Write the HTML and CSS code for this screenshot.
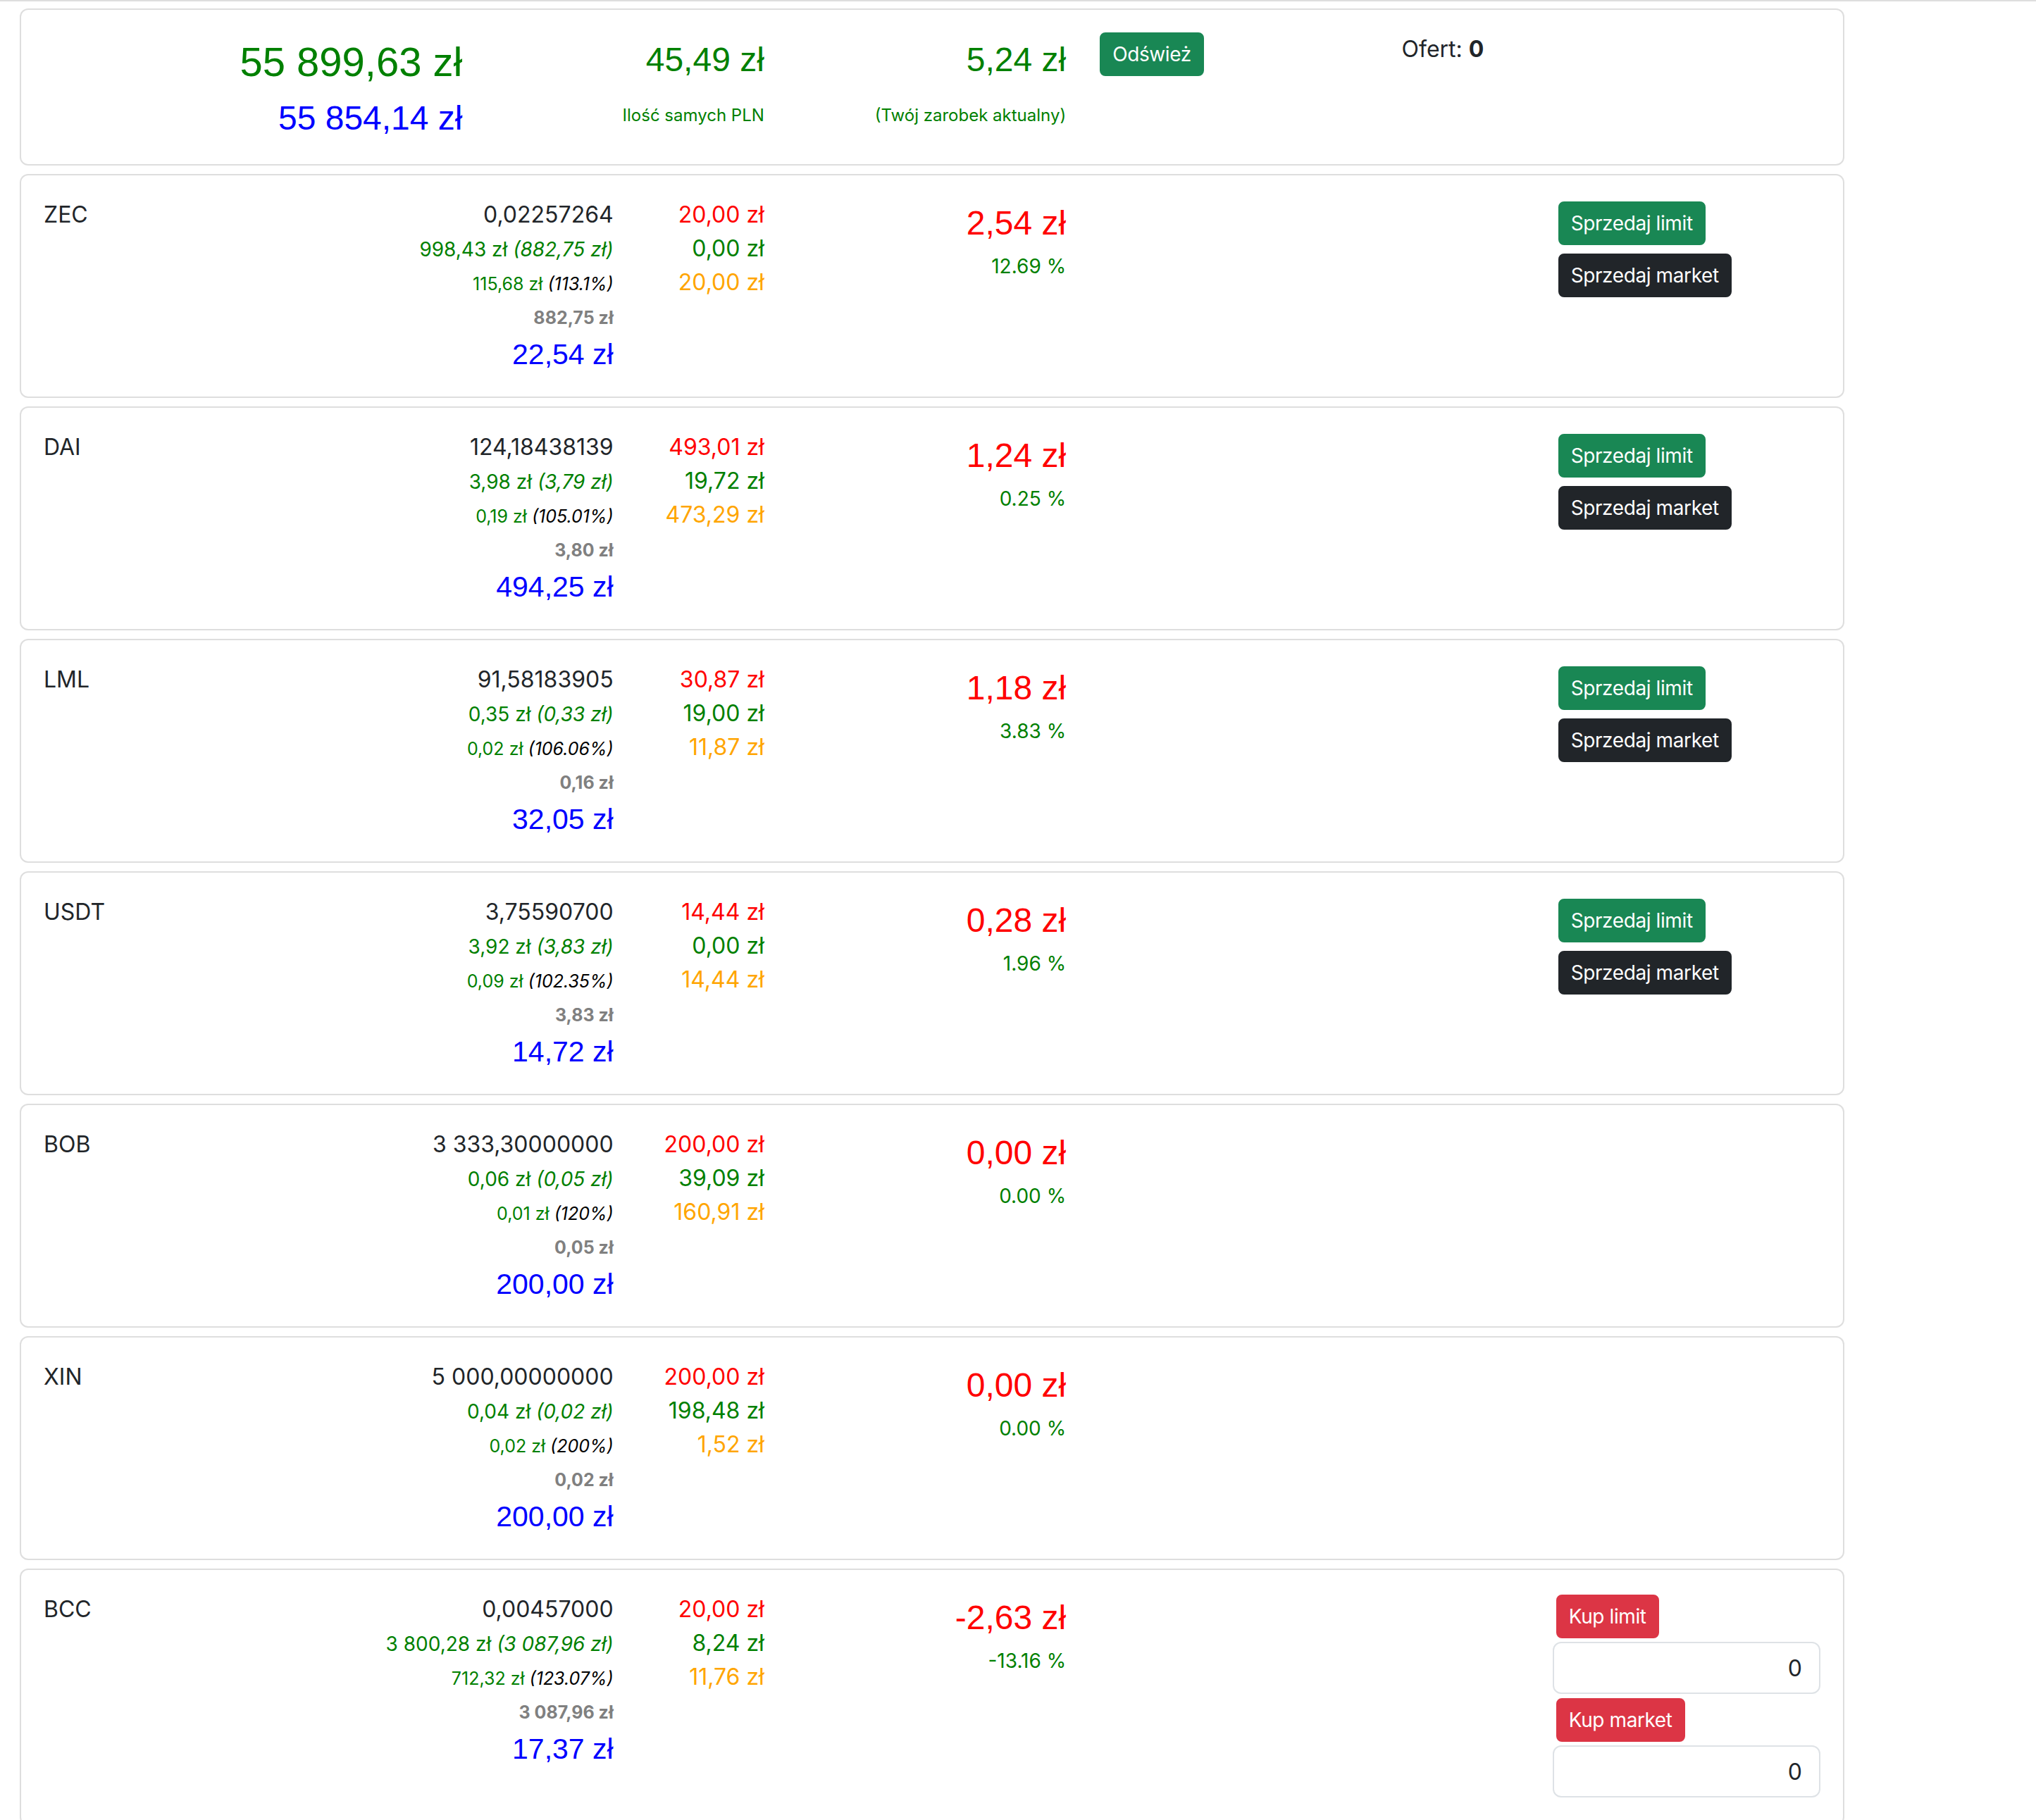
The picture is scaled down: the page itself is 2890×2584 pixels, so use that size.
FILE: index.html
```html
<!DOCTYPE html>
<html lang="pl">
<head>
<meta charset="utf-8">
<title>Portfel</title>
<link rel="stylesheet" href="styles.css">
</head>
<body>
<div class="topline"></div>
<main class="page">

  <section class="card">
    <div class="row">
      <div class="s3 r">
        <div class="tot">55 899,63 zł</div>
        <div class="tot2">55 854,14 zł</div>
      </div>
      <div class="s2 r">
        <div class="mid">45,49 zł</div>
        <div class="lbl">Ilość samych PLN</div>
      </div>
      <div class="s2 r">
        <div class="mid">5,24 zł</div>
        <div class="lbl">(Twój zarobek aktualny)</div>
      </div>
      <div class="s2">
        <button class="btn btn-success">Odśwież</button>
      </div>
      <div class="s3">Ofert: <b>0</b></div>
    </div>
  </section>

  <section class="card">
    <div class="row">
      <div class="s2">ZEC</div>
      <div class="s2 r">
        <div>0,02257264</div>
        <div><span class="val">998,43 zł <i>(882,75 zł)</i></span></div>
        <div><span class="pct">115,68 zł <i>(113.1%)</i></span></div>
        <div><span class="cost">882,75 zł</span></div>
        <div class="worth">22,54 zł</div>
      </div>
      <div class="s1 r">
        <div class="red">20,00 zł</div>
        <div class="grn">0,00 zł</div>
        <div class="org">20,00 zł</div>
      </div>
      <div class="s2 r">
        <div class="profit">2,54 zł</div>
        <div><span class="pp">12.69 %</span></div>
      </div>
      <div class="s3"></div>
      <div class="s2 acts">
        <button class="btn btn-success">Sprzedaj limit</button>
        <button class="btn btn-dark">Sprzedaj market</button>
      </div>
    </div>
  </section>

  <section class="card">
    <div class="row">
      <div class="s2">DAI</div>
      <div class="s2 r">
        <div>124,18438139</div>
        <div><span class="val">3,98 zł <i>(3,79 zł)</i></span></div>
        <div><span class="pct">0,19 zł <i>(105.01%)</i></span></div>
        <div><span class="cost">3,80 zł</span></div>
        <div class="worth">494,25 zł</div>
      </div>
      <div class="s1 r">
        <div class="red">493,01 zł</div>
        <div class="grn">19,72 zł</div>
        <div class="org">473,29 zł</div>
      </div>
      <div class="s2 r">
        <div class="profit">1,24 zł</div>
        <div><span class="pp">0.25 %</span></div>
      </div>
      <div class="s3"></div>
      <div class="s2 acts">
        <button class="btn btn-success">Sprzedaj limit</button>
        <button class="btn btn-dark">Sprzedaj market</button>
      </div>
    </div>
  </section>

  <section class="card">
    <div class="row">
      <div class="s2">LML</div>
      <div class="s2 r">
        <div>91,58183905</div>
        <div><span class="val">0,35 zł <i>(0,33 zł)</i></span></div>
        <div><span class="pct">0,02 zł <i>(106.06%)</i></span></div>
        <div><span class="cost">0,16 zł</span></div>
        <div class="worth">32,05 zł</div>
      </div>
      <div class="s1 r">
        <div class="red">30,87 zł</div>
        <div class="grn">19,00 zł</div>
        <div class="org">11,87 zł</div>
      </div>
      <div class="s2 r">
        <div class="profit">1,18 zł</div>
        <div><span class="pp">3.83 %</span></div>
      </div>
      <div class="s3"></div>
      <div class="s2 acts">
        <button class="btn btn-success">Sprzedaj limit</button>
        <button class="btn btn-dark">Sprzedaj market</button>
      </div>
    </div>
  </section>

  <section class="card">
    <div class="row">
      <div class="s2">USDT</div>
      <div class="s2 r">
        <div>3,75590700</div>
        <div><span class="val">3,92 zł <i>(3,83 zł)</i></span></div>
        <div><span class="pct">0,09 zł <i>(102.35%)</i></span></div>
        <div><span class="cost">3,83 zł</span></div>
        <div class="worth">14,72 zł</div>
      </div>
      <div class="s1 r">
        <div class="red">14,44 zł</div>
        <div class="grn">0,00 zł</div>
        <div class="org">14,44 zł</div>
      </div>
      <div class="s2 r">
        <div class="profit">0,28 zł</div>
        <div><span class="pp">1.96 %</span></div>
      </div>
      <div class="s3"></div>
      <div class="s2 acts">
        <button class="btn btn-success">Sprzedaj limit</button>
        <button class="btn btn-dark">Sprzedaj market</button>
      </div>
    </div>
  </section>

  <section class="card">
    <div class="row">
      <div class="s2">BOB</div>
      <div class="s2 r">
        <div>3 333,30000000</div>
        <div><span class="val">0,06 zł <i>(0,05 zł)</i></span></div>
        <div><span class="pct">0,01 zł <i>(120%)</i></span></div>
        <div><span class="cost">0,05 zł</span></div>
        <div class="worth">200,00 zł</div>
      </div>
      <div class="s1 r">
        <div class="red">200,00 zł</div>
        <div class="grn">39,09 zł</div>
        <div class="org">160,91 zł</div>
      </div>
      <div class="s2 r">
        <div class="profit">0,00 zł</div>
        <div><span class="pp">0.00 %</span></div>
      </div>
      <div class="s3"></div>
      <div class="s2"></div>
    </div>
  </section>

  <section class="card">
    <div class="row">
      <div class="s2">XIN</div>
      <div class="s2 r">
        <div>5 000,00000000</div>
        <div><span class="val">0,04 zł <i>(0,02 zł)</i></span></div>
        <div><span class="pct">0,02 zł <i>(200%)</i></span></div>
        <div><span class="cost">0,02 zł</span></div>
        <div class="worth">200,00 zł</div>
      </div>
      <div class="s1 r">
        <div class="red">200,00 zł</div>
        <div class="grn">198,48 zł</div>
        <div class="org">1,52 zł</div>
      </div>
      <div class="s2 r">
        <div class="profit">0,00 zł</div>
        <div><span class="pp">0.00 %</span></div>
      </div>
      <div class="s3"></div>
      <div class="s2"></div>
    </div>
  </section>

  <section class="card">
    <div class="row">
      <div class="s2">BCC</div>
      <div class="s2 r">
        <div>0,00457000</div>
        <div><span class="val">3 800,28 zł <i>(3 087,96 zł)</i></span></div>
        <div><span class="pct">712,32 zł <i>(123.07%)</i></span></div>
        <div><span class="cost">3 087,96 zł</span></div>
        <div class="worth">17,37 zł</div>
      </div>
      <div class="s1 r">
        <div class="red">20,00 zł</div>
        <div class="grn">8,24 zł</div>
        <div class="org">11,76 zł</div>
      </div>
      <div class="s2 r">
        <div class="profit">-2,63 zł</div>
        <div><span class="pp">-13.16 %</span></div>
      </div>
      <div class="s3"></div>
      <div class="s2 buy">
        <button class="btn btn-danger">Kup limit</button>
        <input class="qty" type="text" value="0">
        <button class="btn btn-danger">Kup market</button>
        <input class="qty" type="text" value="0">
      </div>
    </div>
  </section>

</main>
</body>
</html>
```

FILE: styles.css
```css
* { box-sizing: border-box; }

html, body {
  margin: 0;
  padding: 0;
  background: #fff;
}

body {
  font-family: Inter, "Noto Sans", "Liberation Sans", sans-serif;
  font-size: 32px;
  line-height: 1.5;
  color: #212529;
}

.topline {
  height: 2px;
  background: #dedede;
}

.page {
  width: 2618px;
  padding: 10px 0 40px 28px;
  display: flex;
  flex-direction: column;
  gap: 12px;
}

.card {
  border: 2px solid rgba(0, 0, 0, 0.13);
  border-radius: 12px;
  padding: 32px;
  background: #fff;
}

.row {
  display: grid;
  grid-template-columns: repeat(12, minmax(0, 1fr));
  margin: 0 -24px;
}

.row > div {
  padding: 0 24px;
  white-space: nowrap;
}

.s1 { grid-column: span 1; }
.s2 { grid-column: span 2; }
.s3 { grid-column: span 3; }

.r { text-align: right; }

/* summary card */
.tot {
  font-family: "Liberation Sans", Arial, sans-serif;
  font-size: 58px;
  line-height: 84px;
  color: #008000;
}

.tot2 {
  font-family: "Liberation Sans", Arial, sans-serif;
  font-size: 48px;
  line-height: 66px;
  margin-top: 5px;
  color: #0000ff;
}

.mid {
  font-family: "Liberation Sans", Arial, sans-serif;
  font-size: 48px;
  line-height: 78px;
  color: #008000;
}

.lbl {
  font-size: 24px;
  line-height: 36px;
  margin-top: 22px;
  color: #008000;
}

/* asset rows */
.val {
  font-size: 28px;
  color: #008000;
}

.pct {
  font-size: 25px;
  color: #008000;
}

.pct i { color: #000; }

.cost {
  font-size: 25px;
  font-weight: 700;
  color: #808080;
}

.worth {
  font-family: "Liberation Sans", Arial, sans-serif;
  font-size: 41px;
  line-height: 55px;
  padding-top: 3px;
  color: #0000ff;
}

.red { color: #ff0000; }
.grn { color: #008000; }
.org { color: #ffa500; }

.profit {
  font-family: "Liberation Sans", Arial, sans-serif;
  font-size: 48px;
  line-height: 72px;
  color: #ff0000;
}

.pp {
  font-size: 28px;
  color: #008000;
}

/* buttons */
.btn {
  font-family: Inter, "Noto Sans", sans-serif;
  font-size: 28px;
  line-height: 42px;
  letter-spacing: -0.4px;
  padding: 8px 16px;
  border: 2px solid transparent;
  border-radius: 8px;
  color: #fff;
  cursor: pointer;
}

.btn-success { background: #198754; border-color: #198754; }
.btn-dark { background: #212529; border-color: #212529; }
.btn-danger { background: #dc3545; border-color: #dc3545; }

.acts {
  display: flex;
  flex-direction: column;
  align-items: flex-start;
  gap: 12px;
}

.acts .btn { margin-left: 8px; }
.acts .btn:first-child { margin-top: 5px; }

.buy {
  display: flex;
  flex-direction: column;
  align-items: flex-start;
}

.buy .btn { margin-left: 5px; }
.buy .btn:first-child { margin-top: 3px; }

.qty {
  display: block;
  width: 100%;
  height: 74px;
  margin: 5px 0 6px;
  padding: 8px 24px;
  font-family: Inter, "Noto Sans", sans-serif;
  font-size: 32px;
  line-height: 48px;
  color: #212529;
  text-align: right;
  border: 2px solid #dee2e6;
  border-radius: 12px;
  background: #fff;
}
```
